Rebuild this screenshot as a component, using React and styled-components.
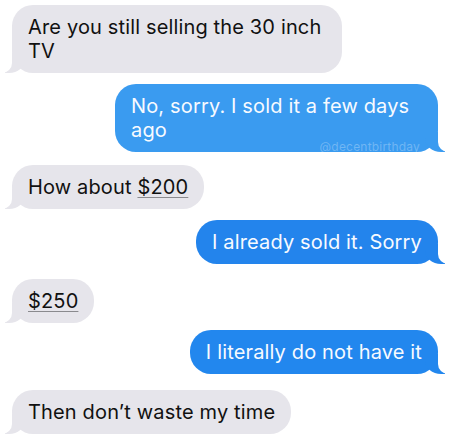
import React from "react";
import styled, { createGlobalStyle, css } from "styled-components";

const GlobalStyle = createGlobalStyle`
  html, body {
    margin: 0;
    padding: 0;
    background: #ffffff;
  }
  body {
    font-family: "Inter", "Liberation Sans", sans-serif;
  }
`;

const GRAY = "#e6e5eb";

const Thread = styled.div`
  width: 450px;
  height: 440px;
  overflow: hidden;
  box-sizing: border-box;
  padding: 5px 12px 0 12px;
  display: flex;
  flex-direction: column;
  background: #ffffff;
`;

const Bubble = styled.div`
  position: relative;
  box-sizing: border-box;
  max-width: ${(p) => p.$max || 330}px;
  margin-top: ${(p) => p.$gap || 0}px;
  padding: 10px 16px;
  border-radius: 21px;
  font-size: 20px;
  line-height: 24px;
  letter-spacing: 0.15px;
  align-self: ${(p) => (p.$mine ? "flex-end" : "flex-start")};
  background: ${(p) => (p.$mine ? p.$tone : GRAY)};
  color: ${(p) => (p.$mine ? "#f7faff" : "#111111")};

  &::before,
  &::after {
    content: "";
    position: absolute;
    bottom: 0;
    height: 20px;
  }

  ${(p) =>
    p.$mine
      ? css`
          &::before {
            right: -7px;
            width: 20px;
            background: ${p.$tone};
            border-bottom-left-radius: 16px 14px;
          }
          &::after {
            right: -10px;
            width: 10px;
            background: #ffffff;
            border-bottom-left-radius: 10px;
          }
        `
      : css`
          &::before {
            left: -7px;
            width: 20px;
            background: ${GRAY};
            border-bottom-right-radius: 16px 14px;
          }
          &::after {
            left: -10px;
            width: 10px;
            background: #ffffff;
            border-bottom-right-radius: 10px;
          }
        `}
`;

const Detected = styled.span`
  text-decoration: underline;
  text-decoration-color: #8a8a8e;
  text-decoration-thickness: 1px;
  text-underline-offset: 3px;
`;

const Watermark = styled.span`
  position: absolute;
  right: 18px;
  bottom: 0;
  font-size: 12px;
  line-height: 10px;
  letter-spacing: 0.2px;
  color: rgba(255, 255, 255, 0.28);
`;

const messages = [
  { text: "Are you still selling the 30 inch TV", gap: 0 },
  {
    text: "No, sorry. I sold it a few days ago",
    mine: true,
    tone: "#3a9bf0",
    gap: 11,
    max: 323,
    mark: "@decentbirthday",
  },
  { text: ["How about ", <Detected key="d">$200</Detected>], gap: 13 },
  { text: "I already sold it. Sorry", mine: true, tone: "#2384ec", gap: 11 },
  { text: [<Detected key="d">$250</Detected>], gap: 15 },
  { text: "I literally do not have it", mine: true, tone: "#2287ee", gap: 7 },
  { text: "Then don\u2019t waste my time", gap: 16 },
];

export default function App() {
  return (
    <>
      <GlobalStyle />
      <Thread>
        {messages.map((m, i) => (
          <Bubble key={i} $mine={m.mine} $tone={m.tone} $gap={m.gap} $max={m.max}>
            {m.text}
            {m.mark && <Watermark>{m.mark}</Watermark>}
          </Bubble>
        ))}
      </Thread>
    </>
  );
}
